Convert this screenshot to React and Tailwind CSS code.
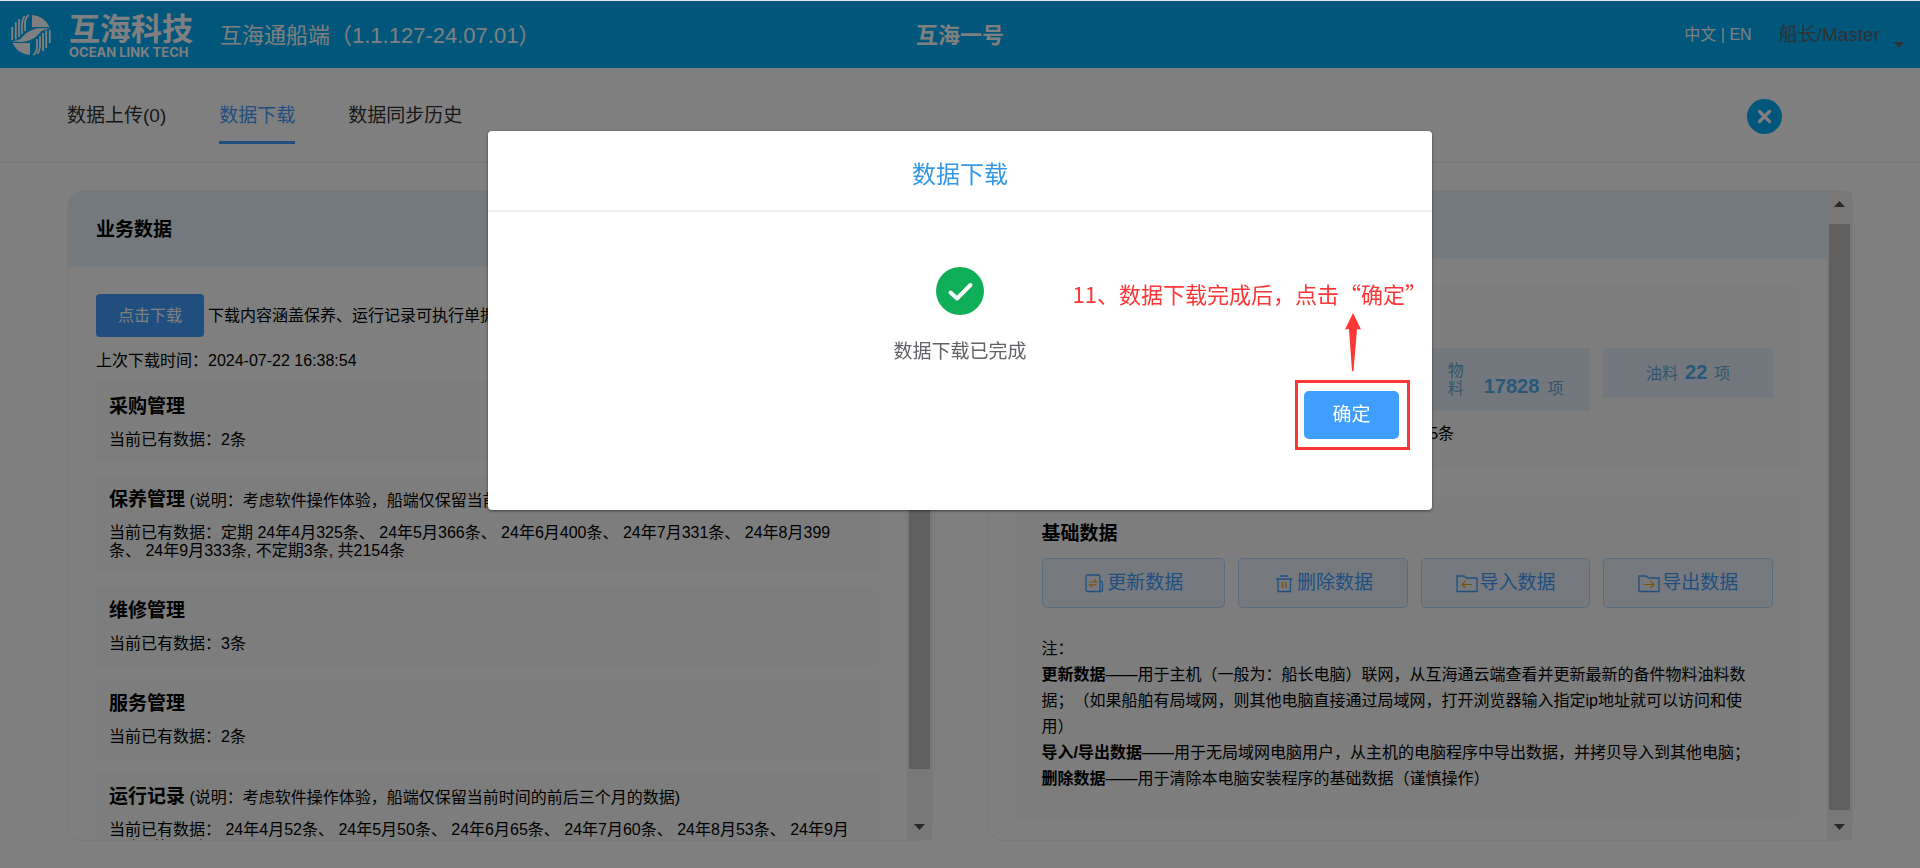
import { useState } from 'react';

const tabs = ['数据上传(0)', '数据下载', '数据同步历史'];

const modules = [
  { title: '采购管理', text: '当前已有数据：2条' },
  {
    title: '保养管理',
    note: '(说明：考虑软件操作体验，船端仅保留当前时间的前后三个月的数据)',
    text: '当前已有数据：定期 24年4月325条、 24年5月366条、 24年6月400条、 24年7月331条、 24年8月399条、 24年9月333条, 不定期3条, 共2154条',
  },
  { title: '维修管理', text: '当前已有数据：3条' },
  { title: '服务管理', text: '当前已有数据：2条' },
  {
    title: '运行记录',
    note: '(说明：考虑软件操作体验，船端仅保留当前时间的前后三个月的数据)',
    text: '当前已有数据： 24年4月52条、 24年5月50条、 24年6月65条、 24年7月60条、 24年8月53条、 24年9月44条, 共324条',
  },
];

function LogoHalf() {
  return (
    <g>
      <path d="M1 -20 A20 20 0 0 1 18.500 -8 H1 Z" />
      <path d="M-11 5 C-7 -1 -1 -6 9 -7 L19.500 -6.500 Q13 -5.500 8 -3 L-2 5 Z" />
      <path
        d="M-2.200 -20 Q-6 -17 -6 -12 V-4 M-6.500 -19 Q-9 -15 -9 -11 V-1 M-12 -16 V2 M-15.200 -13 V4.500 M-18.800 -8 V5"
        fill="none"
        stroke="currentColor"
        strokeWidth="1.800"
      />
    </g>
  );
}

function Logo() {
  return (
    <svg viewBox="-21 -21 42 42" className="size-[42px]" fill="currentColor">
      <LogoHalf />
      <g transform="rotate(180)">
        <LogoHalf />
      </g>
    </svg>
  );
}

function UpdateIcon() {
  return (
    <svg viewBox="0 0 22 22" className="size-[22px]" fill="none" stroke="#409eff" strokeWidth="1.300">
      <path d="M17 19.500 H4.500 Q3 19.500 3 18 V4.500 Q3 3 4.500 3 H15.500 Q17 3 17 4.500 Z" />
      <path d="M17 9.500 H18 Q19.500 9.500 19.500 11 V18 Q19.500 19.500 18 19.500 H16" />
      <path d="M6.500 10 H13.500 L11 7.500 M13.500 12.800 H6.500 L9 15.300" stroke="#f5a623" strokeWidth="1.200" />
    </svg>
  );
}

function DeleteIcon() {
  return (
    <svg viewBox="0 0 22 22" className="size-[22px]" fill="none" stroke="#409eff" strokeWidth="1.300">
      <path d="M3 7 H19.500 M7 4 H15.500 M5 7 V19.500 H17.500 V7" />
      <path d="M9.500 10 V16 M13 10 V16" stroke="#f5a623" strokeWidth="1.500" />
    </svg>
  );
}

function FolderIcon({ out }) {
  return (
    <svg viewBox="0 0 22 22" className="size-[22px]" fill="none" stroke="#409eff" strokeWidth="1.300">
      <path d="M1 19.500 V4 H8 L10.500 6 H21 V19.500 Z" />
      <path
        d={out ? 'M6 12.500 H16 M12.500 9 L16 12.500 L12.500 16' : 'M16 12.500 H6 M9.500 9 L6 12.500 L9.500 16'}
        stroke="#f5a623"
        strokeWidth="1.200"
      />
    </svg>
  );
}

const actions = [
  { label: '更新数据', icon: <UpdateIcon /> },
  { label: '删除数据', icon: <DeleteIcon /> },
  { label: '导入数据', icon: <FolderIcon /> },
  { label: '导出数据', icon: <FolderIcon out /> },
];

function ScrollTrack({ thumb }) {
  return (
    <div className="flex w-[25px] shrink-0 flex-col items-center bg-[#f1f1f1]">
      <svg viewBox="0 0 11 6" className="mt-2.5 mb-[17px] h-1.5 w-[11px] shrink-0 fill-[#505050]">
        <path d="M0 6 L5.500 0 L11 6 Z" />
      </svg>
      <div className="flex w-[21px] flex-1 flex-col">
        <div className="bg-[#c1c1c1]" style={{ height: `${thumb}%` }} />
      </div>
      <svg viewBox="0 0 11 6" className="mt-3.5 mb-2.5 h-1.5 w-[11px] shrink-0 fill-[#505050]">
        <path d="M0 0 L5.500 6 L11 0 Z" />
      </svg>
    </div>
  );
}

function Panel({ thumb, children }) {
  return (
    <section className="flex min-w-0 flex-1 rounded-2xl border border-[#f3f3f3]">
      <div className="min-w-0 flex-1 overflow-hidden rounded-l-2xl">{children}</div>
      <ScrollTrack thumb={thumb} />
    </section>
  );
}

function Count({ label, value }) {
  return (
    <div className="flex h-[50px] items-baseline justify-center gap-[7px] bg-[#e5f1fa] pt-3 leading-6 text-[#66a9d9]">
      <span>{label}</span>
      <b className="text-xl leading-6 text-[#50aef5]">{value}</b>
      <span>项</span>
    </div>
  );
}

function DownloadDialog({ onClose }) {
  return (
    <div className="fixed inset-0 border-t border-[#e0e8ec] bg-black/50 pt-[15vh]">
      <div
        role="dialog"
        aria-label="数据下载"
        className="relative mx-auto h-[379px] w-[944px] rounded-sm bg-white shadow-[0_1px_3px_rgba(0,0,0,0.5)]"
      >
        <h2 className="border-b-2 border-[#eeeeee] pt-[29px] pb-5 text-center text-2xl leading-[30px] text-[#3598e5]">
          数据下载
        </h2>
        <div className="flex flex-col items-center pt-[55px]">
          <svg viewBox="0 0 48 48" className="size-12">
            <circle cx="24" cy="24" r="24" fill="#0fae58" />
            <path
              d="M14.500 25.500 L21 31.500 L34.500 18"
              fill="none"
              stroke="#fff"
              strokeWidth="4"
              strokeLinecap="round"
              strokeLinejoin="round"
            />
          </svg>
          <p className="mt-6 text-[19px] leading-[26px] text-[#606266]">数据下载已完成</p>
        </div>
        <div className="mt-[26px] flex justify-end pr-[33px]">
          <button onClick={onClose} className="h-12 w-[95px] rounded-[5px] bg-[#409eff] text-[19px] text-white">
            确定
          </button>
        </div>

        {/* step callout */}
        <div className="absolute top-[147px] right-[5px] flex flex-col items-end text-[#fd3636]">
          <p lang="zh-CN" className="font-['Noto_Sans_CJK_SC',sans-serif] text-[22px] leading-[30px]">
            11、数据下载完成后，点击“确定”
          </p>
          <svg viewBox="0 0 16 58" className="mt-[5px] mr-[66px] h-[58px] w-4" fill="currentColor">
            <path d="M8 0 L16 16.500 L12 16 L8.500 58 L7 58 L4 16 L0 16.500 Z" />
          </svg>
          <div className="mt-[9px] mr-[17px] h-[70px] w-[115px] border-3" />
        </div>
      </div>
    </div>
  );
}

export default function App() {
  const [open, setOpen] = useState(true);
  const [active, setActive] = useState(1);

  return (
    <div className="flex h-screen flex-col overflow-hidden bg-white font-['Liberation_Sans','Noto_Sans_CJK_SC',sans-serif] text-base text-black [text-spacing-trim:space-all]">
      <header className="grid h-[68px] shrink-0 grid-cols-[1fr_auto_1fr] items-center bg-[#02acf7] pt-0.5 text-white">
        <div className="flex items-center pl-2.5">
          <Logo />
          <div className="ml-[17px] pt-1">
            <div className="text-[31px] leading-[30px] font-bold">互海科技</div>
            <div className="font-['Inter',sans-serif] text-[13px] leading-3.5 font-bold">OCEAN LINK TECH</div>
          </div>
          <span className="ml-[27px] text-[22px]">互海通船端（1.1.127-24.07.01）</span>
        </div>
        <h1 className="text-[22px] font-bold">互海一号</h1>
        <div className="flex items-center justify-end pr-4">
          <div>
            <a href="#zh">中文</a> | <a href="#en">EN</a>
          </div>
          <button className="ml-[27px] flex items-center text-[19px] text-[#606266]">
            船长/Master
            <svg viewBox="0 0 10 6" className="mt-5 ml-3.5 h-1.5 w-2.5 fill-[#606266]">
              <path d="M0 0 L5 6 L10 0 Z" />
            </svg>
          </button>
        </div>
      </header>

      <nav className="flex h-[95px] shrink-0 items-center border-b border-[#eeeeee] pt-[3px] pr-[138px] pl-[67px]">
        <div className="flex flex-1 gap-[53px] pt-2">
          {tabs.map((tab, i) => (
            <button
              key={tab}
              onClick={() => setActive(i)}
              className={
                i === active
                  ? 'border-b-3 border-[#409eff] pt-1 pb-[11px] text-[19px] leading-7 text-[#409eff]'
                  : 'border-b-3 border-transparent pt-1 pb-[11px] text-[19px] leading-7 text-[#303133]'
              }
            >
              {tab}
            </button>
          ))}
        </div>
        <button aria-label="关闭" className="size-[35px] rounded-full bg-[#02acf7]">
          <svg viewBox="0 0 35 35" fill="none" stroke="#fff" strokeWidth="3.200" strokeLinecap="round">
            <path d="M12.500 12.500 L22.500 22.500 M22.500 12.500 L12.500 22.500" />
          </svg>
        </button>
      </nav>

      <main className="flex min-h-0 flex-1 gap-[55px] px-[67px] pt-[27px] pb-[27px]">
        <Panel thumb={93}>
          <h2 className="h-[76px] bg-[#e8f3fb] px-7 text-[19px] leading-[78px] font-bold">业务数据</h2>
          <div className="px-7 pt-[27px]">
            <div className="flex items-center gap-1 whitespace-nowrap">
              <button className="h-[43px] w-[108px] shrink-0 rounded bg-[#409eff] text-white">点击下载</button>
              <span>下载内容涵盖保养、运行记录可执行单据</span>
            </div>
            <p className="mt-[11px] mb-2 leading-[26px]">上次下载时间：2024-07-22 16:38:54</p>
            <div className="flex flex-col gap-[13px]">
              {modules.map((item) => (
                <div key={item.title} className="bg-[#fbfbfb] pt-3 pr-6 pb-[13px] pl-[13px]">
                  <h3 className="h-[26px] leading-[26px] whitespace-nowrap">
                    <b className="text-[19px] leading-[26px]">{item.title}</b> {item.note}
                  </h3>
                  <p className="mt-[11px] leading-[18px]">{item.text}</p>
                </div>
              ))}
            </div>
          </div>
        </Panel>

        <Panel thumb={100}>
          <div className="h-[68px] bg-[#e8f3fb]" />
          <div className="flex flex-col gap-[26px] pt-[27px] pr-7 pl-[27px]">
            <div className="bg-[#fbfbfb] p-[26px]">
              <h3 className="text-[19px] leading-[26px] font-bold">船舶数据</h3>
              <div className="mt-2.5 grid grid-cols-[183fr_169fr_169fr_169fr] items-start gap-[13px]">
                <Count label="设备" value="2025" />
                <Count label="备件" value="9265" />
                <div className="flex items-end justify-center bg-[#e5f1fa] pt-3.5 pb-[13px] leading-[18px] text-[#66a9d9]">
                  <span className="w-4">物料</span>
                  <b className="ml-5 text-xl leading-6 text-[#50aef5]">17828</b>
                  <span className="ml-2">项</span>
                </div>
                <Count label="油料" value="22" />
              </div>
              <p className="mt-3.5 leading-[18px]">当前已有数据：备件9265条、 物料17828条、 设备2025条</p>
            </div>
            <div className="bg-[#fbfbfb] p-[26px]">
              <h3 className="text-[19px] leading-[26px] font-bold">基础数据</h3>
              <div className="mt-[11px] grid grid-cols-[183fr_169fr_169fr_169fr] gap-[13px]">
                {actions.map((action) => (
                  <button
                    key={action.label}
                    className="flex h-[50px] items-center justify-center gap-0.5 rounded-[5px] border border-[#b3d8ff] bg-[#ecf5ff] text-[19px] text-[#409eff]"
                  >
                    {action.icon}
                    {action.label}
                  </button>
                ))}
              </div>
              <div className="mt-7 pr-1 leading-[26px]">
                <p>注：</p>
                <p>
                  <b>更新数据</b>
                  ——用于主机（一般为：船长电脑）联网，从互海通云端查看并更新最新的备件物料油料数据；（如果船舶有局域网，则其他电脑直接通过局域网，打开浏览器输入指定ip地址就可以访问和使用）
                </p>
                <p>
                  <b>导入/导出数据</b>
                  ——用于无局域网电脑用户，从主机的电脑程序中导出数据，并拷贝导入到其他电脑；
                </p>
                <p>
                  <b>删除数据</b>
                  ——用于清除本电脑安装程序的基础数据（谨慎操作）
                </p>
              </div>
            </div>
          </div>
        </Panel>
      </main>

      {open && <DownloadDialog onClose={() => setOpen(false)} />}
    </div>
  );
}
